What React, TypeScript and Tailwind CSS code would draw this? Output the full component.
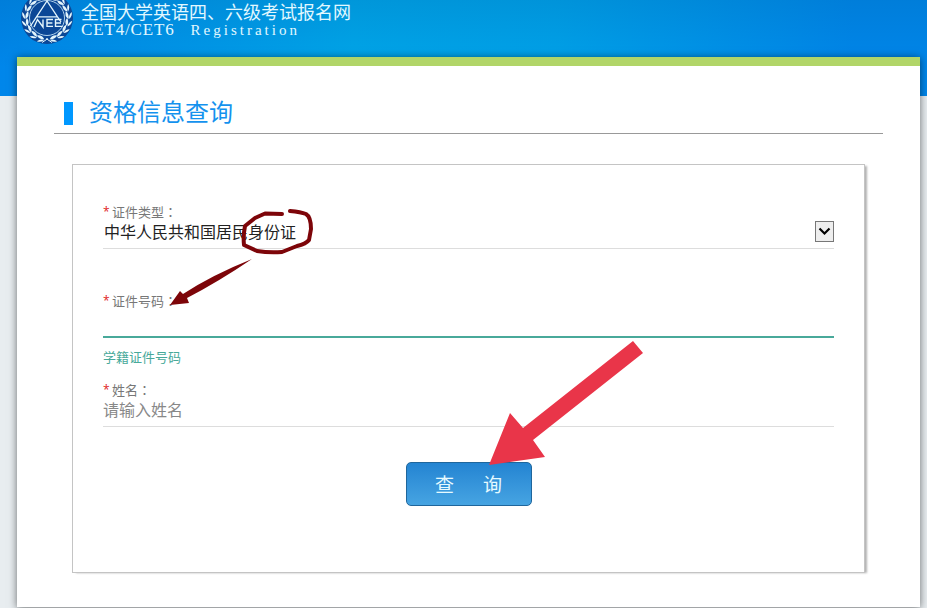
import React from "react";

const LEAF_ANGLES = [10, 30, 50, 70, 90, 110, 130, 150];

function Emblem() {
  return (
    <svg width="52" height="52" viewBox="-26 -26 52 52" aria-hidden="true" className="-mt-2 shrink-0">
      <circle r="26" fill="#0b4796" />
      <circle r="17.5" fill="none" stroke="#c5e2f5" strokeWidth="0.9" />
      {[1, -1].map((side) => (
        <g key={side} transform={`scale(${side} 1)`}>
          {LEAF_ANGLES.map((angle) => (
            <g key={angle} transform={`rotate(${-angle}) translate(0 21.5)`}>
              <path d="M-1 0Q2 -4.4 7 -2.6Q4 0.8 -1 0Z" fill="#e4f5fc" />
              <path d="M-1 0.6Q3 0 6 3.2Q2 4 -1 0.6Z" fill="#e4f5fc" />
            </g>
          ))}
          <path d="M-1 20.5L5 24.5" stroke="#e4f5fc" strokeWidth="1" />
        </g>
      ))}
      <path d="M-16.5 8L-10.5 -1.2L0 -17L10.5 -1.2L14 4M-10 -1.2H10.5" fill="none" stroke="#e4f5fc" strokeWidth="1.3" />
      <path d="M-13 9L-9.5 1.5L-4 9V1.5M6 1.5H0V8.4H6M0 5H5.4M14.5 1.5H8.5V8.4H15.5M8.5 5H14" fill="none" stroke="#e4f5fc" strokeWidth="1.4" />
    </svg>
  );
}

function FieldLabel({ htmlFor, children }: { htmlFor: string; children: React.ReactNode }) {
  return (
    <label htmlFor={htmlFor} className="flex text-[13px] leading-[18px] text-[#777]">
      <span className="w-[9px] font-['Open_Sans',sans-serif] text-[12px] text-[#e02020]">*</span>
      {children}
      <span className="font-['Noto_Sans_CJK_TC',sans-serif]">：</span>
    </label>
  );
}

function Annotations() {
  return (
    <svg className="pointer-events-none absolute inset-0 h-full w-full overflow-visible" aria-hidden="true">
      <g transform="translate(-73 -165)">
        <path
          d="M282 214L265 213.5L255 218L245 226Q243 236 244 245L257 251Q269 253 282 252L297 246Q306 244 309 240L311 229Q311 217 306 214Q301 212 290 211"
          fill="none"
          stroke="#7d0509"
          strokeWidth="4"
          strokeLinecap="round"
          strokeLinejoin="round"
        />
        <path d="M170 305L180 291L183 294Q212 275 252 259Q218 282 187 298L189 303Z" fill="#7d0509" />
        <path d="M633 341L643 353L533 440L545 457L489 465L510 413L523 428Z" fill="#e93549" />
      </g>
    </svg>
  );
}

export default function App() {
  return (
    <div className="min-h-screen bg-[#e8edf0] pb-px font-['Noto_Sans_CJK_SC',sans-serif]">
      <header className="flex h-24 items-start bg-[linear-gradient(180deg,#0060a038,#0090ff00_70%),linear-gradient(90deg,#0086ea,#00a6ea_38%,#00a2ea_60%,#0086ea_92%)] pl-[21px]">
        <Emblem />
        <div className="ml-2 text-[#e2f8ff]">
          <p className="text-[18px] leading-[22px]">全国大学英语四、六级考试报名网</p>
          <p className="flex items-baseline gap-4 font-['Liberation_Serif',serif] text-[17px] leading-4">
            <span className="tracking-wider">CET4/CET6</span>
            <span className="text-[15px] tracking-[0.2em]">Registration</span>
          </p>
        </div>
      </header>

      <main className="-mt-[39px] mr-[7px] ml-[17px] border-t-[9px] border-[#b1d568] bg-white px-[37px] pt-[27px] pb-[34px] shadow-[0_1px_8px_rgba(0,0,0,0.55)]">
        <h1 className="flex items-center gap-4 border-b border-[#999] pl-[10px] text-[24px] text-[#1492ee]">
          <span className="h-[23px] w-[9px] bg-[#0098ff]" />
          <span className="pb-1 leading-9">资格信息查询</span>
        </h1>

        <form
          className="relative mr-[18px] ml-[18px] mt-[30px] border border-[#c4c4c4] pr-[30px] pl-[30px] pt-[38px] pb-[66px] shadow-[3px_1px_2px_-1px_rgba(0,0,0,0.3)]"
          onSubmit={(event) => event.preventDefault()}
        >
          <FieldLabel htmlFor="id-type">证件类型</FieldLabel>
          <div className="relative border-b border-[#ddd] pb-[7px]">
            <select id="id-type" className="block h-5 w-full appearance-none bg-transparent pl-px text-[16px] leading-5 text-[#222]">
              <option>中华人民共和国居民身份证</option>
            </select>
            <span className="pointer-events-none absolute top-0 right-0 flex h-[21px] w-[19px] items-center justify-center border border-[#777] bg-[#eee]">
              <svg width="13" height="9" viewBox="0 0 13 9" aria-hidden="true">
                <path d="M1.5 1.5L6.5 6.5L11.5 1.5" fill="none" stroke="#000" strokeWidth="2.2" />
              </svg>
            </span>
          </div>

          <div className="mt-[43px]">
            <FieldLabel htmlFor="id-number">证件号码</FieldLabel>
            <input
              id="id-number"
              aria-describedby="id-number-hint"
              className="block h-7 w-full border-b-2 border-[#48a99a] bg-transparent text-[16px] outline-none"
            />
            <p id="id-number-hint" className="mt-[10px] text-[13px] leading-[18px] text-[#48a99a]">
              学籍证件号码
            </p>
          </div>

          <div className="mt-[15px]">
            <FieldLabel htmlFor="full-name">姓名</FieldLabel>
            <input
              id="full-name"
              placeholder="请输入姓名"
              className="block h-7 w-full border-b border-[#ddd] bg-transparent pb-[7px] text-[16px] leading-5 outline-none placeholder:text-[#888]"
            />
          </div>

          <button
            type="submit"
            className="mx-auto mt-[35px] flex h-11 w-[126px] items-center justify-center gap-[29px] rounded-[5px] border border-[#1f669c] bg-linear-to-b from-[#2384d2] to-[#46a4e2] text-[19px] text-[#e6faff]"
          >
            <span>查</span>
            <span>询</span>
          </button>

          <Annotations />
        </form>
      </main>
    </div>
  );
}
